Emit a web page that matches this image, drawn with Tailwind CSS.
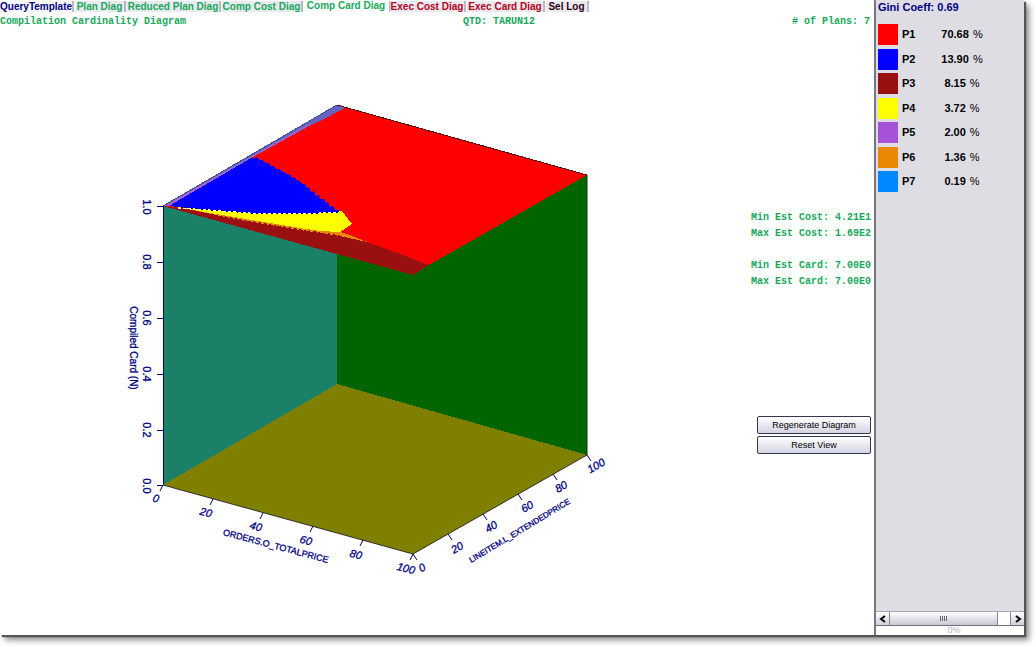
<!DOCTYPE html>
<html lang="en">
<head>
    <meta charset="UTF-8">
    <meta name="viewport" content="width=device-width, initial-scale=1.0">
    <title>Compilation Cardinality Diagram</title>
    <script src="https://cdn.jsdelivr.net/npm/@tailwindcss/browser@4"></script>
</head>
<body class="h-screen overflow-hidden bg-white pr-3 pb-3 font-['Liberation_Sans',Arial,sans-serif]">

    <!-- Application window -->
    <div class="flex h-full bg-white shadow-[2px_2px_1px_#555555,5px_5px_6px_#888888]">

        <main class="flex min-w-0 flex-1 flex-col">
            <!-- Tabs -->
            <nav class="flex h-3 shrink-0 items-end gap-px text-[10px] leading-[11px] font-bold whitespace-nowrap text-[#17a85a]">
                <a href="#query" class="w-[74px] border-r-2 border-[#b8b8c4] bg-[#f6f6fa] text-[#000080]">QueryTemplate</a>
                <a href="#plan" class="w-[51px] border-r-2 border-[#b8b8c4] bg-[#e9e9f0] text-center">Plan Diag</a>
                <a href="#reduced" class="w-[94px] border-r-2 border-[#b8b8c4] bg-[#e9e9f0] text-center">Reduced Plan Diag</a>
                <a href="#comp-cost" class="w-[81px] border-r-2 border-[#b8b8c4] bg-[#e9e9f0] text-center">Comp Cost Diag</a>
                <a href="#comp-card" class="w-[84px] pb-px text-center" aria-current="page">Comp Card Diag</a>
                <a href="#exec-cost" class="w-[77px] border-r-2 border-l border-[#b8b8c4] bg-[#e9e9f0] text-center text-[#b80018]">Exec Cost Diag</a>
                <a href="#exec-card" class="w-[78px] border-r-2 border-[#b8b8c4] bg-[#e9e9f0] text-center text-[#b80018]">Exec Card Diag</a>
                <a href="#sel-log" class="w-[43px] border-r-2 border-[#b8b8c4] bg-[#e9e9f0] text-center text-[#300010]">Sel Log</a>
            </nav>

            <header class="flex h-[18px] shrink-0 items-center justify-between pr-1 font-['Liberation_Mono',monospace] text-[10px] font-bold text-[#17a85a]">
                <h1 class="w-[200px]">Compilation Cardinality Diagram</h1>
                <p class="pl-32">QTD: TARUN12</p>
                <p class="w-[200px] text-right"># of Plans: 7</p>
            </header>

            <div class="flex min-h-0 flex-1">
                <!-- 3D plot -->
                <svg class="h-full min-w-0 flex-1" viewBox="0 30 756 605" role="img" aria-label="Cardinality plot">
                    <g shape-rendering="crispEdges">
                        <path fill="#1b8068" d="M163 206L337 105V384L163 485Z"/>
                        <path fill="#006400" d="M337 105L587 175V455L337 384Z"/>
                        <path fill="#808000" d="M163 485L337 384L587 455L413 554Z"/>
                        <path fill="#9a1010" d="M163 206L400 240L429 265L413 275Z"/>
                        <path fill="#ff0000" d="M163 206L337 105L587 175L429 265L400 254L370 243L340 235L300 227L240 219Z"/>
                        <path fill="#9a1010" d="M168 206L240 219L300 227L340 235L370 243L400 254L429 265L413 275Z"/>
                        <path fill="#e88a08" d="M173 206L240 217L300 226L338 231L352 236L367 242L340 236L300 230L240 220Z"/>
                        <path fill="#ffff00" d="M175 207L240 212L341 211L345 215L348 219L352 224L346 228L340 232L320 231L300 228L240 218Z"/>
                        <path fill="#0000ff" d="M169 206L251 158L256 158L264 162L275 168L284 172L293 178L304 185L314 194L324 201L331 207L339 212L300 214L250 213L210 210Z"/>
                        <path fill="#a058d0" d="M163 206L337 105L345 108L320 121L311 125L251 158L169 206Z"/>
                        <path fill="#6464c4" d="M163 206L337 105L345 108L320 121L311 125L251 157Z"/>
                        <path fill="none" stroke="#a070c8" d="M168 205L250 158L310 124"/>
                    </g>
                    <!-- Stepped region borders -->
                    <g fill="none" stroke-width="1" shape-rendering="crispEdges">
                        <path stroke="#ffffff" stroke-dasharray="3 2" d="M178 208L210 210L250 213L300 214L339 212"/>
                        <path stroke="#000030" stroke-dasharray="2 3" d="M181 207L210 210L250 213L300 214L339 212"/>
                        <path stroke="#0000ff" stroke-width="2" stroke-dasharray="3 3" d="M256 158L275 168L293 178L304 185L324 201L339 212"/>
                        <path stroke="#9a1010" stroke-width="2" stroke-dasharray="2 3" d="M200 213L240 220L300 230L340 236"/>
                        <path stroke="#501010" d="M337 105L587 175"/>
                        <path stroke="#4848a0" d="M163 206L337 105"/>
                    </g>
                    <!-- Axes and ticks -->
                    <g fill="none" stroke="#000060" stroke-width="1">
                        <path d="M163 206V485" stroke="#000080" shape-rendering="crispEdges"/>
                        <path d="M163 485L413 554L587 455" stroke="#303030"/>
                        <path d="M587 175V455" stroke="#103010"/>
                        <path d="M157 206h6M157 262h6M157 318h6M157 374h6M157 430h6M157 485h6" shape-rendering="crispEdges"/>
                        <path d="M163 485l-3 6M213 499l-3 6M263 513l-3 6M313 526l-3 6M363 540l-3 6M413 554l-3 6"/>
                        <path d="M413 554l4 6M448 534l4 6M483 514l4 6M518 494l4 6M553 474l4 6M587 455l4 6"/>
                    </g>
                    <g class="font-['Liberation_Sans',Arial,sans-serif] text-[11px]" fill="#000080" stroke="#000080" stroke-width="0.3" text-anchor="middle">
                        <text transform="translate(143 207) rotate(90)">1.0</text>
                        <text transform="translate(143 262) rotate(90)">0.8</text>
                        <text transform="translate(143 318) rotate(90)">0.6</text>
                        <text transform="translate(143 374) rotate(90)">0.4</text>
                        <text transform="translate(143 430) rotate(90)">0.2</text>
                        <text transform="translate(143 486) rotate(90)">0.0</text>
                        <text class="text-[10px]" transform="translate(130 348) rotate(90)">Compiled Card (N)</text>
                        <g font-style="italic">
                            <text transform="translate(155 502) rotate(15)">0</text>
                            <text transform="translate(205 516) rotate(15)">20</text>
                            <text transform="translate(255 530) rotate(15)">40</text>
                            <text transform="translate(305 544) rotate(15)">60</text>
                            <text transform="translate(355 558) rotate(15)">80</text>
                            <text transform="translate(405 572) rotate(15)">100</text>
                            <text transform="translate(424 571) rotate(-30)">0</text>
                            <text transform="translate(459 551) rotate(-30)">20</text>
                            <text transform="translate(493 530) rotate(-30)">40</text>
                            <text transform="translate(529 510) rotate(-30)">60</text>
                            <text transform="translate(563 490) rotate(-30)">80</text>
                            <text transform="translate(598 469) rotate(-30)">100</text>
                        </g>
                        <text class="text-[9px]" transform="translate(275 549) rotate(15)">ORDERS.O_TOTALPRICE</text>
                        <text class="text-[8px]" transform="translate(521 533) rotate(-31)">LINEITEM.L_EXTENDEDPRICE</text>
                    </g>
                </svg>

                <!-- Estimates and actions -->
                <div class="flex w-[118px] shrink-0 flex-col items-end pt-[180px] pr-[3px]">
                    <div class="font-['Liberation_Mono',monospace] text-[10px] leading-4 font-bold whitespace-nowrap text-[#17a85a]">
                        <p>Min Est Cost: 4.21E1</p>
                        <p>Max Est Cost: 1.69E2</p>
                        <p class="mt-4">Min Est Card: 7.00E0</p>
                        <p>Max Est Card: 7.00E0</p>
                    </div>
                    <div class="mt-[126px] flex w-[114px] flex-col gap-[2px] text-[9px] leading-4 text-black">
                        <button type="button" class="rounded-xs border border-[#303850] bg-linear-to-b from-white to-[#d4d4e4]">Regenerate Diagram</button>
                        <button type="button" class="rounded-xs border border-[#303850] bg-linear-to-b from-white to-[#d4d4e4]">Reset View</button>
                    </div>
                </div>
            </div>
        </main>

        <!-- Plan legend -->
        <aside class="flex w-[150px] shrink-0 flex-col border-l-2 border-[#77777f] bg-[#dedde3] text-[11px] font-bold">
            <h2 class="h-6 pt-px pl-0.5 leading-3 text-[#000080]">Gini Coeff: 0.69</h2>
            <ul class="flex h-[168px] flex-col justify-between pl-0.5">
                <li class="flex h-[21px] items-center"><span class="h-[21px] w-5 bg-[#ff0000]"></span><span class="w-8 pl-1">P1</span><span class="w-16 text-center">70.68 <span class="pl-px font-normal">%</span></span></li>
                <li class="flex h-[21px] items-center"><span class="h-[21px] w-5 bg-[#0000ff]"></span><span class="w-8 pl-1">P2</span><span class="w-16 text-center">13.90 <span class="pl-px font-normal">%</span></span></li>
                <li class="flex h-[21px] items-center"><span class="h-[21px] w-5 bg-[#9a1010]"></span><span class="w-8 pl-1">P3</span><span class="w-16 text-center">8.15 <span class="pl-px font-normal">%</span></span></li>
                <li class="flex h-[21px] items-center"><span class="h-[21px] w-5 bg-[#ffff00]"></span><span class="w-8 pl-1">P4</span><span class="w-16 text-center">3.72 <span class="pl-px font-normal">%</span></span></li>
                <li class="flex h-[21px] items-center"><span class="h-[21px] w-5 bg-[#a552d6]"></span><span class="w-8 pl-1">P5</span><span class="w-16 text-center">2.00 <span class="pl-px font-normal">%</span></span></li>
                <li class="flex h-[21px] items-center"><span class="h-[21px] w-5 bg-[#ea8703]"></span><span class="w-8 pl-1">P6</span><span class="w-16 text-center">1.36 <span class="pl-px font-normal">%</span></span></li>
                <li class="flex h-[21px] items-center"><span class="h-[21px] w-5 bg-[#0088ff]"></span><span class="w-8 pl-1">P7</span><span class="w-16 text-center">0.19 <span class="pl-px font-normal">%</span></span></li>
            </ul>

            <!-- Horizontal scrollbar -->
            <div class="mt-auto flex h-[15px] border-t border-b border-t-[#a8a8b0] border-b-[#707078] bg-white">
                <button type="button" aria-label="Scroll left" class="flex w-3.5 items-center justify-center border-r border-[#85858f] bg-linear-to-b from-white to-[#d0d0dc]">
                    <svg class="h-2 w-2" viewBox="0 0 8 8" fill="none" stroke="#000000" stroke-width="2"><path d="M6 1L2 4L6 7"/></svg>
                </button>
                <div class="flex flex-1 items-center justify-center gap-px border-r border-[#85858f] bg-linear-to-b from-white to-[#c8c8d6]">
                    <span class="h-[5px] w-px bg-[#666670]"></span>
                    <span class="h-[5px] w-px bg-[#666670]"></span>
                    <span class="h-[5px] w-px bg-[#666670]"></span>
                    <span class="h-[5px] w-px bg-[#666670]"></span>
                </div>
                <div class="w-3"></div>
                <button type="button" aria-label="Scroll right" class="flex w-3.5 items-center justify-center border-l border-[#85858f] bg-linear-to-b from-white to-[#d0d0dc]">
                    <svg class="h-2 w-2" viewBox="0 0 8 8" fill="none" stroke="#000000" stroke-width="2"><path d="M2 1L6 4L2 7"/></svg>
                </button>
            </div>
            <div class="bg-white pl-2 text-center text-[9px] leading-[9px] font-normal text-[#b4b4b8]">0%</div>
        </aside>
    </div>
</body>
</html>
